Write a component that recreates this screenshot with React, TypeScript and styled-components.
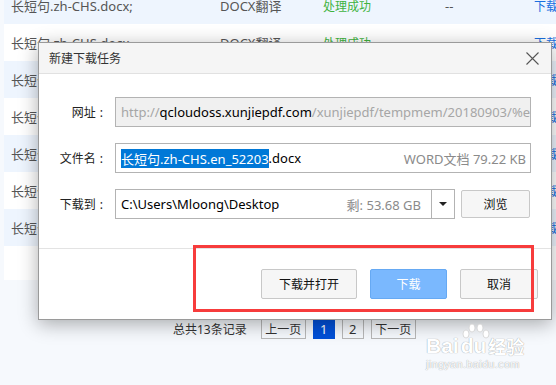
import React from 'react'
import styled, { createGlobalStyle } from 'styled-components'

const GlobalStyle = createGlobalStyle`
  html, body {
    margin: 0;
    padding: 0;
  }
  body {
    width: 556px;
    height: 385px;
    overflow: hidden;
    background: #f6f9fd;
    font-family: "Noto Sans", "Noto Sans CJK SC", sans-serif;
    font-size: 13px;
  }
`

const Page = styled.div`
  position: relative;
  width: 556px;
  height: 385px;
  overflow: hidden;
`

const Table = styled.div`
  margin: -13px 0 0 4px;
  padding-bottom: 34px;
  background: #fff;
`

const Row = styled.div<{ $striped?: boolean }>`
  display: grid;
  grid-template-columns: 209px 103px 122px 89px 1fr;
  align-items: center;
  height: 37px;
  padding-left: 7px;
  background: ${({ $striped }) => ($striped ? '#eef5fe' : '#fff')};
  color: #555;
  white-space: nowrap;
`

const Status = styled.span`
  color: #3fb33f;
  font-size: 12px;
`

const Action = styled.span`
  color: #1a6fe0;
  font-size: 12px;
`

const Pager = styled.div`
  display: flex;
  align-items: center;
  gap: 7px;
  margin-top: 38px;
  padding-left: 173px;
  font-size: 12px;
`

const PagerInfo = styled.span`
  color: #333;
  margin-right: 7px;
`

const PageButton = styled.div<{ $active?: boolean; $wide?: boolean }>`
  display: flex;
  align-items: center;
  justify-content: center;
  box-sizing: border-box;
  height: 21px;
  width: ${({ $wide }) => ($wide ? '45px' : '22px')};
  border: 1px solid ${({ $active }) => ($active ? '#0050d8' : '#b8b8b8')};
  background: ${({ $active }) => ($active ? '#0050d8' : 'transparent')};
  color: ${({ $active }) => ($active ? '#fff' : '#333')};
  font-size: ${({ $wide }) => ($wide ? '12px' : '13px')};
`

const Dialog = styled.div`
  position: absolute;
  left: 38px;
  top: 42px;
  width: 514px;
  box-sizing: border-box;
  border: 1px solid #9a9a9a;
  background: #fff;
  box-shadow: 0 4px 18px rgba(0, 0, 0, 0.32);
`

const Header = styled.div`
  display: flex;
  align-items: center;
  justify-content: space-between;
  box-sizing: border-box;
  height: 31px;
  padding: 0 12px 0 10px;
  background: #f5f5f5;
  border-bottom: 1px solid #e1e1e1;
`

const Title = styled.span`
  color: #333;
  font-size: 12px;
`

const Body = styled.div`
  display: grid;
  grid-template-columns: 64px 1fr;
  column-gap: 12px;
  row-gap: 16px;
  align-items: center;
  padding: 23px 20px 29px 0;
  border-bottom: 1px solid #e3e3e3;
`

const Label = styled.div`
  text-align: right;
  color: #222;
  font-size: 12px;

  &::after {
    content: ':';
    margin-left: 4px;
  }
`

const Field = styled.div<{ $disabled?: boolean }>`
  display: flex;
  align-items: center;
  box-sizing: border-box;
  height: 30px;
  padding: 0 4px 0 5px;
  border: 1px solid #b3b3b3;
  background: ${({ $disabled }) => ($disabled ? '#f0f0f0' : '#fff')};
  color: #000;
  white-space: nowrap;
  overflow: hidden;
`

const Muted = styled.span`
  color: #a6a6a6;
`

const Hint = styled.span`
  margin-left: auto;
  color: #8a8a8a;
`

const Selected = styled.span`
  background: #0078d7;
  color: #fff;
`

const PathRow = styled.div`
  display: flex;
  align-items: center;
  gap: 6px;
`

const PathField = styled(Field)`
  width: 340px;
  padding-right: 0;
`

const PathHint = styled(Hint)`
  margin-right: 10px;
`

const Dropdown = styled.div`
  display: flex;
  align-items: center;
  justify-content: center;
  align-self: stretch;
  width: 22px;
  border-left: 1px solid #b3b3b3;
`

const Caret = styled.span`
  width: 0;
  height: 0;
  border-left: 4px solid transparent;
  border-right: 4px solid transparent;
  border-top: 4px solid #222;
`

const Button = styled.button<{ $primary?: boolean; $width: number; $height?: number }>`
  box-sizing: border-box;
  width: ${({ $width }) => $width}px;
  height: ${({ $height }) => $height ?? 30}px;
  padding: 0;
  border: 1px solid ${({ $primary }) => ($primary ? '#66a9f3' : '#c8c8c8')};
  border-radius: 2px;
  background: ${({ $primary }) => ($primary ? '#7ab8fe' : '#f6f6f6')};
  color: ${({ $primary }) => ($primary ? '#fff' : '#111')};
  font-family: inherit;
  font-size: 12px;
`

const Footer = styled.div`
  display: flex;
  justify-content: flex-end;
  gap: 13px;
  padding: 20px 13px 20px 0;
`

const Highlight = styled.div`
  position: absolute;
  left: 193px;
  top: 245px;
  width: 341px;
  height: 67px;
  box-sizing: border-box;
  border: 3px solid #f73c3c;
`

const Watermark = styled.div`
  position: absolute;
  left: 426px;
  top: 323px;
  color: #fff;
  white-space: nowrap;
  font-family: "Liberation Sans", "Noto Sans CJK SC", sans-serif;
  text-shadow: 0 0 1px rgba(0, 0, 0, 0.3), 0 0 1px rgba(0, 0, 0, 0.2);
`

const Brand = styled.div`
  display: flex;
  align-items: flex-end;
  gap: 2px;
  height: 33px;
  font-size: 21px;
  font-weight: bold;
  line-height: 20px;
`

const Cn = styled.span`
  font-size: 18px;
  font-family: "Noto Sans CJK SC", sans-serif;
`

const Paw = styled.svg`
  position: absolute;
  left: 35px;
  top: 0;
`

const Domain = styled.div`
  margin-top: 2px;
  font-size: 11px;
  letter-spacing: 0.3px;
`

const rows = [true, false, true, false, true, false, true]

const CloseIcon = () => (
  <svg width="13" height="13" viewBox="0 0 13 13">
    <path d="M0.5 0.5L12.5 12.5M12.5 0.5L0.5 12.5" stroke="#555" strokeWidth="1.1" fill="none" />
  </svg>
)

export default function App() {
  return (
    <Page>
      <GlobalStyle />
      <Table>
        {rows.map((striped, i) => (
          <Row key={i} $striped={striped}>
            <span>{i === 0 ? '长短句.zh-CHS.docx;' : '长短句.zh-CHS.docx'}</span>
            <span>DOCX翻译</span>
            <Status>处理成功</Status>
            <span>--</span>
            <Action>下载</Action>
          </Row>
        ))}
      </Table>

      <Pager>
        <PagerInfo>总共13条记录</PagerInfo>
        <PageButton $wide>上一页</PageButton>
        <PageButton $active>1</PageButton>
        <PageButton>2</PageButton>
        <PageButton $wide>下一页</PageButton>
      </Pager>

      <Dialog>
        <Header>
          <Title>新建下载任务</Title>
          <CloseIcon />
        </Header>
        <Body>
          <Label>网址</Label>
          <Field $disabled>
            <Muted>http://</Muted>qcloudoss.xunjiepdf.com
            <Muted>/xunjiepdf/tempmem/20180903/%e9%9</Muted>
          </Field>

          <Label>文件名</Label>
          <Field>
            <Selected>长短句.zh-CHS.en_52203</Selected>.docx
            <Hint>WORD文档 79.22 KB</Hint>
          </Field>

          <Label>下载到</Label>
          <PathRow>
            <PathField>
              C:\Users\Mloong\Desktop
              <PathHint>剩: 53.68 GB</PathHint>
              <Dropdown>
                <Caret />
              </Dropdown>
            </PathField>
            <Button $width={69} $height={28}>浏览</Button>
          </PathRow>
        </Body>
        <Footer>
          <Button $width={96}>下载并打开</Button>
          <Button $primary $width={77}>下载</Button>
          <Button $width={78}>取消</Button>
        </Footer>
      </Dialog>

      <Highlight />

      <Watermark>
        <Paw width="30" height="18" viewBox="0 0 30 18">
          <g fill="#fff" stroke="#d2d2d2" strokeWidth="0.8">
            <ellipse cx="5" cy="11" rx="3" ry="4" />
            <ellipse cx="11" cy="5" rx="3" ry="4" />
            <ellipse cx="19" cy="5" rx="3" ry="4" />
            <ellipse cx="25" cy="11" rx="3" ry="4" />
          </g>
        </Paw>
        <Brand>
          <span>Bai</span>
          <span>du</span>
          <Cn>经验</Cn>
        </Brand>
        <Domain>jingyan.baidu.com</Domain>
      </Watermark>
    </Page>
  )
}
